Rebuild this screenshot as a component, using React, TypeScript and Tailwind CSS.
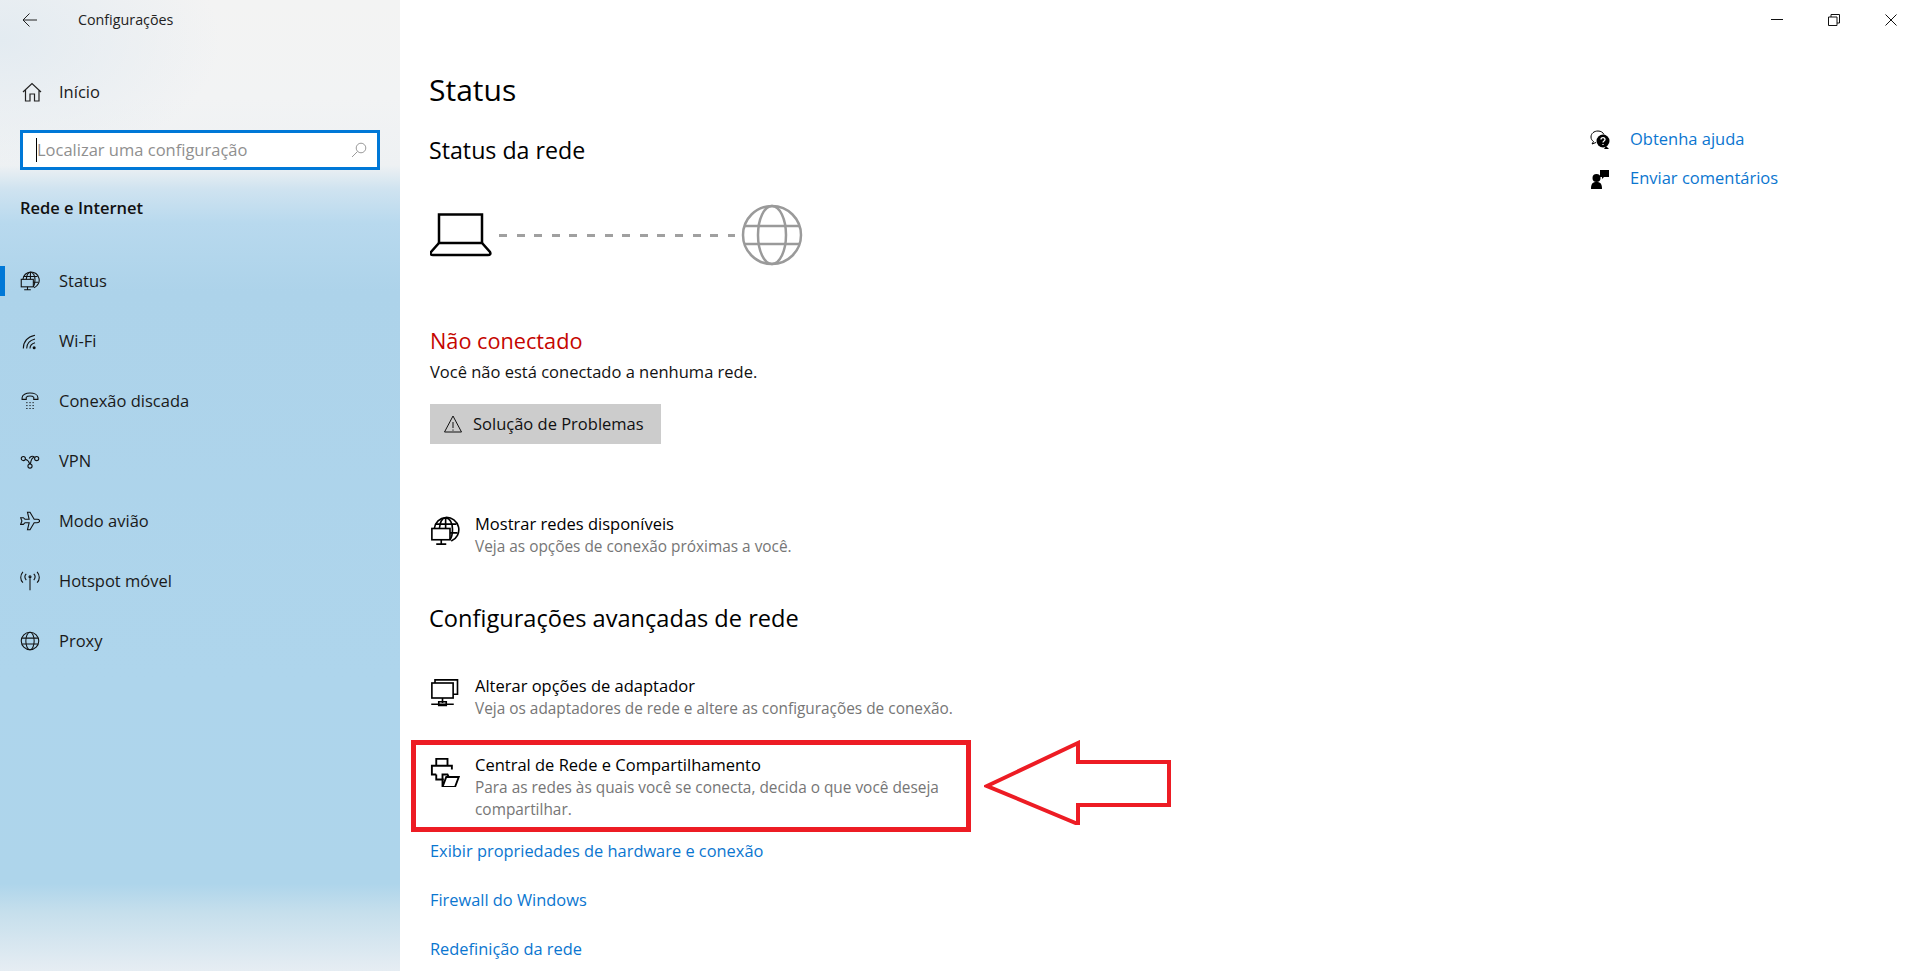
import type { ReactNode } from 'react'

const FONT = "font-['Open_Sans','Noto_Sans',sans-serif]"

function Ico({ children, className }: { children: ReactNode; className?: string }) {
  return (
    <svg viewBox="0 0 24 24" fill="none" stroke="currentColor" strokeWidth="1.300" className={className ?? 'h-[20px] w-[20px] shrink-0'}>
      {children}
    </svg>
  )
}

const GlobePc = () => (
  <>
    <path d="M3.500 10A9.800 9.800 0 1 1 17 20" />
    <path d="M7.500 10C8 5 9.500 1.500 12.500 1.500c3.500 0 5.500 4.500 5.500 9 0 4-1 7-2 8.500" />
    <path d="M12.500 1.500V10M4.500 6.500h16.500M16 13.500h6" />
    <rect x="1.500" y="10" width="14.500" height="9" fill="none" />
    <path d="M9 19v3M5 22.500h8" />
  </>
)

const navItems: { label: string; active?: boolean; icon: ReactNode }[] = [
  { label: 'Status', active: true, icon: <GlobePc /> },
  {
    label: 'Wi-Fi',
    icon: (
      <>
        <path d="M4 21C4 13 9 7 18 5" />
        <path d="M8 21C8 15 12 11 18 9.500" />
        <path d="M12 21c0-3.500 2-6 6-7" />
        <circle cx="17" cy="20" r="1.800" fill="currentColor" stroke="none" />
      </>
    ),
  },
  {
    label: 'Conexão discada',
    icon: (
      <>
        <path d="M2.500 8C2.500 .5 21.500 .5 21.500 8v2h-5V7.500C15 5.500 9 5.500 7.500 7.500V10h-5z" />
        <path d="M7.500 14h1.500M11.300 14h1.500M15 14h1.500M7.500 17.500h1.500M11.300 17.500h1.500M15 17.500h1.500M7.500 21h1.500M11.300 21h1.500M15 21h1.500" strokeWidth="1.200" />
      </>
    ),
  },
  {
    label: 'VPN',
    icon: (
      <>
        <circle cx="4" cy="9" r="2.500" />
        <circle cx="20" cy="9" r="2.500" />
        <circle cx="12" cy="18" r="2.500" />
        <path d="M6.500 10c3 1 4.500 3 5 5.500M12.500 15.500C13 11 15 7 17.500 7.500c-3-2.500-5.500-.5-6.500 1.500" />
      </>
    ),
  },
  {
    label: 'Modo avião',
    icon: <path d="M9 1.500h3l5 8.500h3.500c2 0 3 1 3 2s-1 2-3 2H17l-5 8.500H9l2-8.500H6l-2 2H.8l1.500-4L.8 8H4l2 2h5z" />,
  },
  {
    label: 'Hotspot móvel',
    icon: (
      <>
        <path d="M12 9V23" />
        <circle cx="12" cy="7" r="1.200" />
        <path d="M7.500 3.500c-2 2-2 5 0 7.500M16.500 3.500c2 2 2 5 0 7.500M3.500 1c-3.500 4-3.500 9.500 0 13M20.500 1c3.500 4 3.500 9.500 0 13" />
      </>
    ),
  },
  {
    label: 'Proxy',
    icon: (
      <>
        <circle cx="12" cy="12" r="10.500" />
        <ellipse cx="12" cy="12" rx="5" ry="10.500" />
        <path d="M2.500 8.500h19M2.500 15.500h19" />
      </>
    ),
  },
]

function NavRow({ label, active, icon }: { label: string; active?: boolean; icon: ReactNode }) {
  return (
    <div className="relative flex h-[60px] items-center pl-[20px]">
      {active && <span className="absolute left-0 top-[15px] h-[30px] w-[5px] bg-[#0078d7]" />}
      <span className="flex w-[39px] shrink-0 text-[#111]">
        <Ico>{icon}</Ico>
      </span>
      <span className="text-[16.500px] text-[#1a1a1a]">{label}</span>
    </div>
  )
}

function Sidebar() {
  return (
    <aside className="flex h-full w-[400px] shrink-0 flex-col bg-[radial-gradient(ellipse_220px_130px_at_0px_40px,#e3ebf1_0%,rgba(227,235,241,0)_100%),linear-gradient(180deg,#f3f3f3_0%,#f2f3f4_10%,#eef1f3_17%,#cfe3f0_19.500%,#b8d9ee_23%,#add3ea_30%,#aed5ec_70%,#aed5eb_91%,#c6dfec_94%,#e6edf3_100%)]">
      <div className="flex h-[40px] items-center pl-[22px]">
        <svg viewBox="0 0 16 16" className="h-4 w-4 text-[#222]" fill="none" stroke="currentColor" strokeWidth="1">
          <path d="M15 8H1M7.500 1.500 1 8l6.500 6.500" />
        </svg>
        <span className="ml-[40px] text-[14.300px] text-[#222]">Configurações</span>
      </div>
      <div className="mt-[22px] flex h-[60px] items-center pl-[22px]">
        <svg viewBox="0 0 20 20" className="h-[20px] w-[20px] text-[#222]" fill="none" stroke="currentColor" strokeWidth="1.200">
          <path d="M1 10 10 1.500 19 10M3.500 8v11h4.500v-7h4.500v7H17V8" />
        </svg>
        <span className="ml-[17px] text-[16.500px] text-[#1a1a1a]">Início</span>
      </div>
      <div className="mx-[20px] mt-[8px] flex h-[40px] items-center border-[3px] border-[#0078d7] bg-white pl-[13px] pr-[10px]">
        <span className="h-[24px] w-px bg-black" />
        <span className="flex-1 text-[16.500px] text-[#8f8f8f]">Localizar uma configuração</span>
        <svg viewBox="0 0 16 16" className="h-4 w-4 text-[#9a9a9a]" fill="none" stroke="currentColor" strokeWidth="1">
          <circle cx="10" cy="6" r="4.800" />
          <path d="M6.500 9.500 1 15" />
        </svg>
      </div>
      <div className="mt-[24px] h-[30px] pl-[20px] text-[16.500px] leading-[28px] font-semibold text-[#111]">Rede e Internet</div>
      <nav className="mt-[27px]">
        {navItems.map(item => (
          <NavRow key={item.label} {...item} />
        ))}
      </nav>
    </aside>
  )
}

function SettingRow({ title, children, icon }: { title: string; children: ReactNode; icon: ReactNode }) {
  return (
    <div className="flex w-[540px] pl-[1px]">
      <span className="flex w-[45px] shrink-0 pt-[4px] text-black">{icon}</span>
      <div>
        <div className="text-[16.500px] leading-[24px] text-black">{title}</div>
        <div className="text-[15.400px] leading-[22px] text-[#767676]">{children}</div>
      </div>
    </div>
  )
}

function BlueLink({ children }: { children: ReactNode }) {
  return <div className="h-[49px] pl-[1px] text-[16.400px] leading-[24px] text-[#0b76d0]">{children}</div>
}

export default function App() {
  return (
    <div className={`flex h-[971px] w-full overflow-hidden bg-white ${FONT}`}>
      <Sidebar />
      <main className="relative flex-1 pl-[29px]">
        {/* window controls */}
        <div className="absolute right-[17px] top-[14px] flex items-center gap-[45px] text-[#111]">
          <svg viewBox="0 0 12 12" className="h-3 w-3" stroke="currentColor" fill="none"><path d="M0 5.500h12" /></svg>
          <svg viewBox="0 0 12 12" className="h-3 w-3" stroke="currentColor" fill="none"><path d="M.5 3h8.500v8.500H.5zM3 3V.5h8.500V9H9" /></svg>
          <svg viewBox="0 0 12 12" className="h-3 w-3" stroke="currentColor" fill="none"><path d="M.5.5l11 11M11.500.5l-11 11" /></svg>
        </div>

        <div className="absolute left-[1190px] top-[120px] text-[16.500px] text-[#0b76d0]">
          <div className="flex h-[39px] items-center gap-[20px]">
            <svg viewBox="0 0 20 20" className="h-5 w-5 text-black">
              <path d="M8 1C4 1 1 3.500 1 7c0 2 1 3.500 2.500 4.500L2 14l4-1.500" fill="none" stroke="currentColor" />
              <path d="M8 1c3 0 5 1.500 6 3.500" fill="none" stroke="currentColor" />
              <circle cx="13" cy="11" r="6.500" fill="currentColor" />
              <path d="M16 16l3 3h-5z" fill="currentColor" />
              <path d="M11 9.500c0-2.500 4-2.500 4 0 0 1.500-2 1.500-2 3M13 14v1" stroke="#fff" strokeWidth="1.300" fill="none" />
            </svg>
            <span>Obtenha ajuda</span>
          </div>
          <div className="flex h-[39px] items-center gap-[20px]">
            <svg viewBox="0 0 20 20" className="h-5 w-5 text-black" fill="currentColor">
              <circle cx="6.500" cy="9" r="4" />
              <path d="M1 20c0-6 2-7 5.500-7s5.500 1 5.500 7z" />
              <path d="M10 1h9v7h-5l-2 2V8h-2z" />
            </svg>
            <span>Enviar comentários</span>
          </div>
        </div>

        <h1 className="pt-[68px] text-[30px] leading-[44px] text-black">Status</h1>
        <h2 className="mt-[22px] text-[23.200px] leading-[32px] text-black">Status da rede</h2>

        {/* network diagram */}
        <div className="mt-[38px] flex h-[62px] items-center pl-[1px]">
          <svg viewBox="0 0 62 44" className="h-[44px] w-[62px] text-black" fill="none" stroke="currentColor" strokeWidth="2.500">
            <path d="M9 30V1.500h43V30" />
            <path d="M9 30h43l8 9c1 2 0 3-2 3H3c-2 0-3-1-2-3z" />
          </svg>
          <div className="ml-[7px] h-[3px] w-[236px] bg-[repeating-linear-gradient(90deg,#a0a0a0_0_8px,transparent_8px_17.600px)]" />
          <svg viewBox="0 0 62 62" className="ml-[6px] h-[62px] w-[62px] text-[#9a9a9a]" fill="none" stroke="currentColor" strokeWidth="2.500">
            <circle cx="31" cy="31" r="29" />
            <ellipse cx="31" cy="31" rx="14" ry="29" />
            <path d="M3 22h56M3 40h56" />
          </svg>
        </div>

        <div className="mt-[59px] pl-[1px] text-[21.700px] leading-[32px] text-[#c50500]">Não conectado</div>
        <div className="mt-[1px] pl-[1px] text-[16.500px] leading-[28px] text-[#111]">Você não está conectado a nenhuma rede.</div>
        <button className="ml-[1px] mt-[18px] flex h-[40px] w-[231px] items-center gap-[10px] bg-[#cccccc] pl-[13px] text-[16.500px] text-[#111]">
          <svg viewBox="0 0 20 20" className="h-[20px] w-[20px]" fill="none" stroke="currentColor">
            <path d="M10 2 1.500 18h17zM10 8v6M10 15.500v1.200" />
          </svg>
          Solução de Problemas
        </button>

        <div className="mt-[68px]">
          <SettingRow title="Mostrar redes disponíveis" icon={<Ico className="h-[30px] w-[30px]"><GlobePc /></Ico>}>
            Veja as opções de conexão próximas a você.
          </SettingRow>
        </div>

        <h2 className="mt-[44px] text-[23.600px] leading-[32px] text-black">Configurações avançadas de rede</h2>

        <div className="mt-[40px]">
          <SettingRow
            title="Alterar opções de adaptador"
            icon={
              <Ico className="h-[30px] w-[30px]">
                <rect x="1.500" y="4" width="17" height="12" />
                <path d="M4 4V1.500h18V13h-3.500M10 16v4M1 21h18M7 19h6v3H7z" />
              </Ico>
            }
          >
            Veja os adaptadores de rede e altere as configurações de conexão.
          </SettingRow>
        </div>

        <div className="relative mt-[33px]">
          <SettingRow
            title="Central de Rede e Compartilhamento"
            icon={
              <Ico className="h-[30px] w-[30px]">
                <path d="M5 7V1.500h9V7M5 14H1.500V7h16v3M5 14v4h6" strokeWidth="1.500" />
                <path d="M10 24l3-8h10l-3 8zM10 24v-10h4l1 2h5" strokeWidth="1.500" />
              </Ico>
            }
          >
            Para as redes às quais você se conecta, decida o que você deseja compartilhar.
          </SettingRow>
          {/* annotation box + arrow */}
          <div className="absolute left-[-18px] top-[-13px] h-[92px] w-[560px] border-[5px] border-[#ed1c24]" />
          <svg viewBox="0 0 188 85" className="absolute left-[555px] top-[-13px] h-[85px] w-[188px]" fill="none" stroke="#ed1c24" strokeWidth="4">
            <path d="M3 46 94 3v19h91v43H94v19z" />
          </svg>
        </div>

        <div className="mt-[18px]">
          <BlueLink>Exibir propriedades de hardware e conexão</BlueLink>
          <BlueLink>Firewall do Windows</BlueLink>
          <BlueLink>Redefinição da rede</BlueLink>
        </div>
      </main>
    </div>
  )
}
